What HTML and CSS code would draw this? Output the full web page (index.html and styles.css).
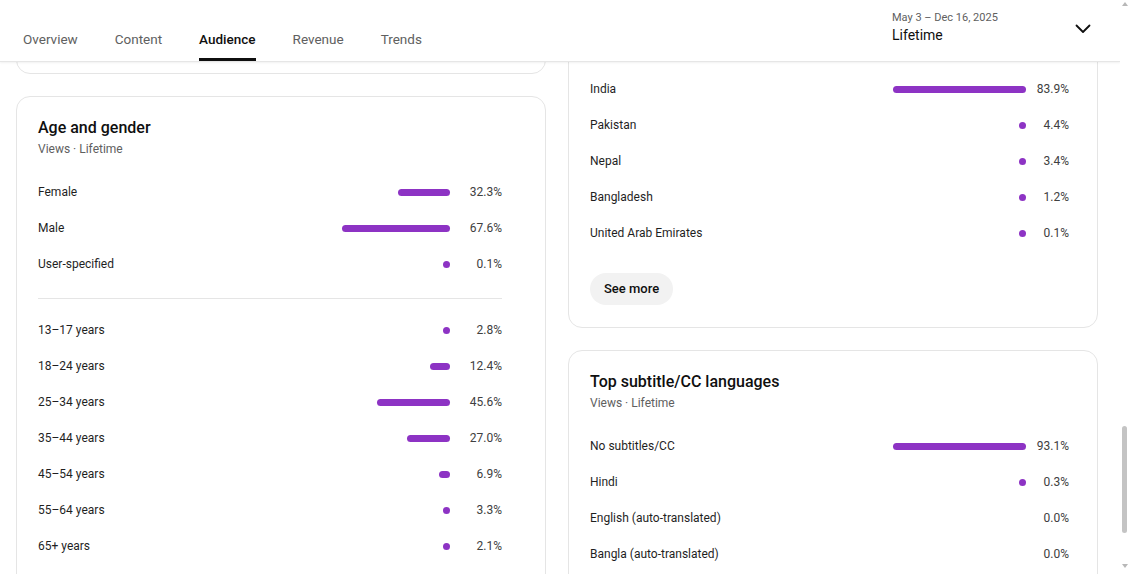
FILE: index.html
```html
<!DOCTYPE html>
<html lang="en">
<head>
<meta charset="utf-8">
<title>Audience</title>
<link rel="stylesheet" href="styles.css">
</head>
<body>
<div class="app">
  <div class="page">
    <header class="topbar">
      <nav class="tabs">
        <a class="tab">Overview</a>
        <a class="tab">Content</a>
        <a class="tab tab-active">Audience</a>
        <a class="tab">Revenue</a>
        <a class="tab">Trends</a>
      </nav>
      <div class="period">
        <div class="period-text">
          <div class="period-range">May 3 – Dec 16, 2025</div>
          <div class="period-name">Lifetime</div>
        </div>
        <svg class="chevron" viewBox="0 0 24 24" width="24" height="24"><path d="M5.5 8.5 12 15l6.5-6.5" fill="none" stroke="#0f0f0f" stroke-width="1.8" stroke-linecap="round" stroke-linejoin="round"/></svg>
      </div>
    </header>

    <main class="content">
      <div class="col">
        <section class="card card-stub"></section>
        <section class="card card-left">
          <h2 class="card-title">Age and gender</h2>
          <div class="card-sub">Views · Lifetime</div>
          <div class="rows">
            <div class="row"><span class="label">Female</span><span class="bar-area"><span class="bar" style="width:52px"></span></span><span class="value">32.3%</span></div>
            <div class="row"><span class="label">Male</span><span class="bar-area"><span class="bar" style="width:108px"></span></span><span class="value">67.6%</span></div>
            <div class="row"><span class="label">User-specified</span><span class="bar-area"><span class="bar" style="width:7px"></span></span><span class="value">0.1%</span></div>
          </div>
          <hr class="divider">
          <div class="rows">
            <div class="row"><span class="label">13–17 years</span><span class="bar-area"><span class="bar" style="width:7px"></span></span><span class="value">2.8%</span></div>
            <div class="row"><span class="label">18–24 years</span><span class="bar-area"><span class="bar" style="width:20px"></span></span><span class="value">12.4%</span></div>
            <div class="row"><span class="label">25–34 years</span><span class="bar-area"><span class="bar" style="width:73px"></span></span><span class="value">45.6%</span></div>
            <div class="row"><span class="label">35–44 years</span><span class="bar-area"><span class="bar" style="width:43px"></span></span><span class="value">27.0%</span></div>
            <div class="row"><span class="label">45–54 years</span><span class="bar-area"><span class="bar" style="width:11px"></span></span><span class="value">6.9%</span></div>
            <div class="row"><span class="label">55–64 years</span><span class="bar-area"><span class="bar" style="width:7px"></span></span><span class="value">3.3%</span></div>
            <div class="row"><span class="label">65+ years</span><span class="bar-area"><span class="bar" style="width:7px"></span></span><span class="value">2.1%</span></div>
          </div>
        </section>
      </div>

      <div class="col">
        <section class="card card-right card-geo">
          <div class="rows">
            <div class="row"><span class="label">India</span><span class="bar-area"><span class="bar" style="width:133px"></span></span><span class="value">83.9%</span></div>
            <div class="row"><span class="label">Pakistan</span><span class="bar-area"><span class="bar" style="width:7px"></span></span><span class="value">4.4%</span></div>
            <div class="row"><span class="label">Nepal</span><span class="bar-area"><span class="bar" style="width:7px"></span></span><span class="value">3.4%</span></div>
            <div class="row"><span class="label">Bangladesh</span><span class="bar-area"><span class="bar" style="width:7px"></span></span><span class="value">1.2%</span></div>
            <div class="row"><span class="label">United Arab Emirates</span><span class="bar-area"><span class="bar" style="width:7px"></span></span><span class="value">0.1%</span></div>
          </div>
          <button class="see-more">See more</button>
        </section>
        <section class="card card-right">
          <h2 class="card-title">Top subtitle/CC languages</h2>
          <div class="card-sub">Views · Lifetime</div>
          <div class="rows">
            <div class="row"><span class="label">No subtitles/CC</span><span class="bar-area"><span class="bar" style="width:133px"></span></span><span class="value">93.1%</span></div>
            <div class="row"><span class="label">Hindi</span><span class="bar-area"><span class="bar" style="width:7px"></span></span><span class="value">0.3%</span></div>
            <div class="row"><span class="label">English (auto-translated)</span><span class="bar-area"></span><span class="value">0.0%</span></div>
            <div class="row"><span class="label">Bangla (auto-translated)</span><span class="bar-area"></span><span class="value">0.0%</span></div>
          </div>
        </section>
      </div>
    </main>
  </div>

  <div class="scrollbar">
    <span class="sb-arrow sb-up"></span>
    <span class="sb-track"><span class="sb-thumb"></span></span>
    <span class="sb-arrow sb-down"></span>
  </div>
</div>
</body>
</html>
```

FILE: styles.css
```css
* { box-sizing: border-box; }

html, body {
  margin: 0;
  height: 100%;
  overflow: hidden;
  background: #ffffff;
}

body {
  font-family: Roboto, "Noto Sans", "Liberation Sans", Arial, sans-serif;
  color: #0f0f0f;
}

.app {
  display: flex;
  height: 574px;
}

.page {
  flex: 1;
  display: flex;
  flex-direction: column;
  min-width: 0;
  overflow: hidden;
}

/* ---------- header ---------- */
.topbar {
  position: relative;
  z-index: 2;
  height: 62px;
  flex: none;
  display: flex;
  align-items: stretch;
  background: #ffffff;
  border-bottom: 1px solid #e6e6e6;
  box-shadow: 0 1px 2px rgba(0, 0, 0, 0.06);
}

.tabs {
  display: flex;
  gap: 37px;
  padding-left: 23px;
}

.tab {
  height: 61px;
  padding-top: 30px;
  font-size: 13.5px;
  line-height: 18px;
  color: #606060;
  border-bottom: 3px solid transparent;
  cursor: pointer;
}

.tab-active {
  color: #0f0f0f;
  font-weight: 500;
  border-bottom-color: #0f0f0f;
}

.period {
  margin-left: auto;
  width: 228px;
  display: flex;
  align-items: center;
  padding-right: 25px;
}

.period-text {
  flex: 1;
  align-self: flex-start;
  padding-top: 10px;
}

.period-range {
  font-size: 11px;
  line-height: 15px;
  color: #606060;
}

.period-name {
  font-size: 14px;
  line-height: 20px;
  font-weight: 400;
  color: #0f0f0f;
}

.chevron {
  display: block;
  margin-top: -3px;
}

/* ---------- content ---------- */
.content {
  display: flex;
  gap: 22px;
  padding-left: 16px;
  margin-top: -41px;
}

.col {
  width: 530px;
  display: flex;
  flex-direction: column;
  gap: 22px;
}

.card {
  background: #ffffff;
  border: 1px solid #e5e5e5;
  border-radius: 14px;
}

.card-stub {
  height: 53px;
}

.card-left {
  padding: 20px 43px 40px 21px;
}

.card-right {
  padding: 20px 28px 40px 21px;
}

.card-geo {
  padding-top: 49px;
  padding-bottom: 22px;
}

.card-title {
  margin: 0;
  font-size: 16px;
  line-height: 22px;
  font-weight: 500;
  color: #0f0f0f;
}

.card-sub {
  margin-top: 1px;
  font-size: 12px;
  line-height: 18px;
  color: #606060;
}

.card-sub + .rows {
  margin-top: 16px;
}

.row {
  display: flex;
  align-items: center;
  height: 36px;
  font-size: 12px;
  line-height: 16px;
}

.label {
  flex: 1;
  color: #1f1f1f;
}

.bar-area {
  display: flex;
  justify-content: flex-end;
}

.bar {
  display: block;
  height: 7px;
  border-radius: 4px;
  background: #8d33c4;
}

.value {
  width: 52px;
  text-align: right;
  color: #404040;
}

.card-right .value {
  width: 43px;
}

.divider {
  margin: 16px 0 13px;
  border: 0;
  border-top: 1px solid #e5e5e5;
  height: 0;
}

.see-more {
  display: block;
  margin-top: 22px;
  height: 32px;
  padding: 0 14px 1px;
  border: 0;
  border-radius: 16px;
  background: #f2f2f2;
  font-family: inherit;
  font-size: 13px;
  line-height: 31px;
  font-weight: 500;
  color: #0f0f0f;
  cursor: pointer;
}

/* ---------- scrollbar ---------- */
.scrollbar {
  width: 9px;
  flex: none;
  display: flex;
  flex-direction: column;
  align-items: center;
  background: #ffffff;
}

.sb-arrow {
  width: 0;
  height: 0;
  border-left: 3px solid transparent;
  border-right: 3px solid transparent;
}

.sb-up {
  margin-top: 2px;
  border-bottom: 4px solid #b8b8b8;
}

.sb-down {
  margin-bottom: 6px;
  border-top: 4px solid #b8b8b8;
}

.sb-track {
  flex: 1;
  width: 100%;
  display: flex;
  justify-content: center;
  padding-top: 420px;
}

.sb-thumb {
  width: 5px;
  height: 107px;
  border-radius: 3px;
  background: #c4c4c4;
}
```
